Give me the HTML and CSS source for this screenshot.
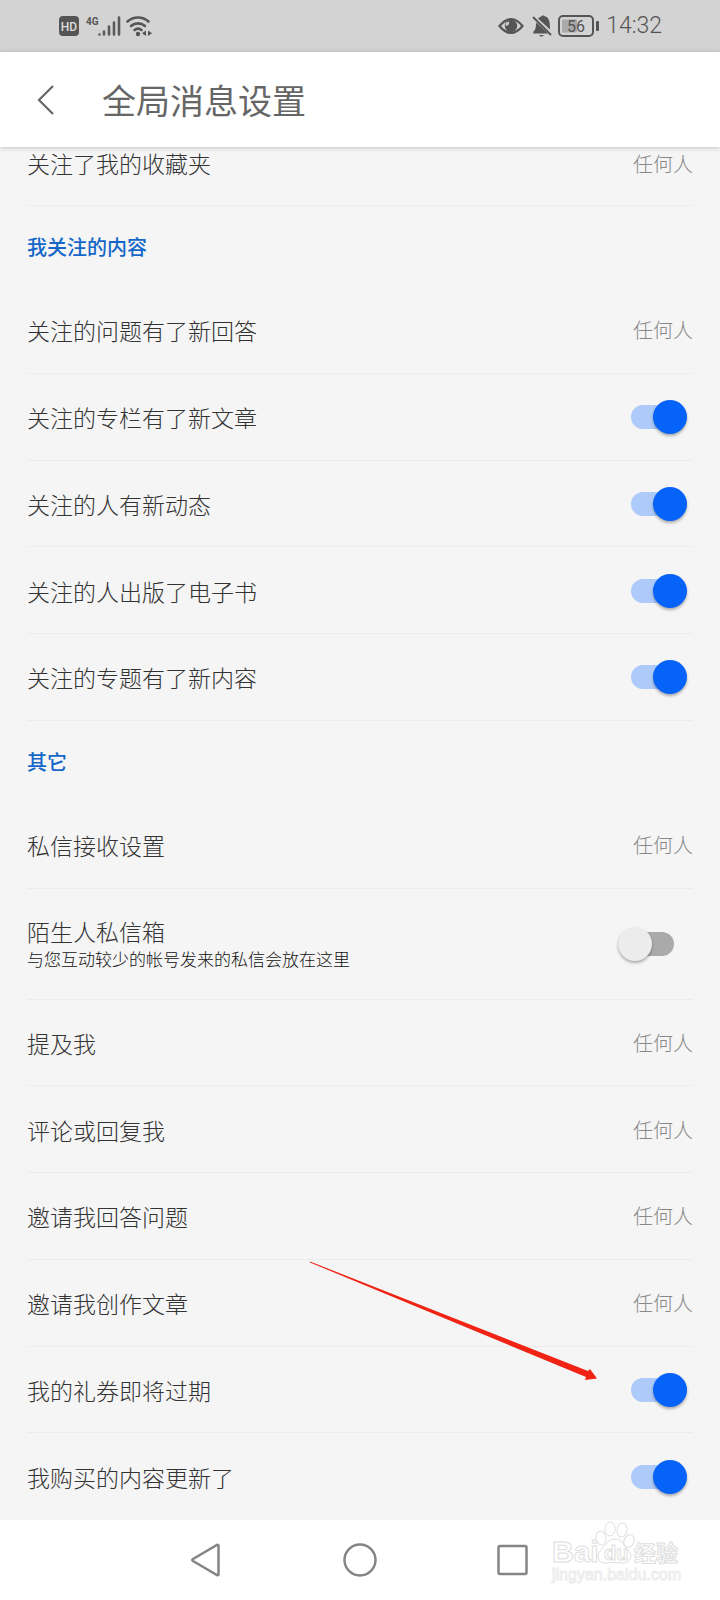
FILE: index.html
```html
<!DOCTYPE html>
<html lang="zh-CN">
<head>
<meta charset="utf-8">
<meta name="viewport" content="width=device-width, initial-scale=1">
<title>全局消息设置</title>
<link rel="stylesheet" href="styles.css">
</head>
<body>
<div class="screen">
  <div class="status">
    <div class="status-group">
      <svg width="96" height="28" viewBox="0 0 96 28" role="img" aria-label="HD 4G">
        <rect x="1" y="4" width="20" height="20" rx="4" fill="#555"/>
        <text x="11" y="18.500" class="hd">HD</text>
        <text x="28" y="13" class="net">4G</text>
        <g stroke="#5a5a5a" stroke-width="2.600" stroke-linecap="round">
          <path d="M41.500 22.500v0M46 19.500v3M51 14.500v8M56 10.500v12M61 5.500v17"/>
        </g>
        <g fill="none" stroke="#555" stroke-width="2.600" stroke-linecap="round">
          <path d="M69.500 9.500a16 16 0 0 1 21 0M73 14a10.500 10.500 0 0 1 14 0M76.500 18a5.500 5.500 0 0 1 7 0"/>
        </g>
        <circle cx="80" cy="22" r="2.200" fill="#555"/>
        <path d="M88 18.500v5.500l-4-2.700zM90 18.500v5.500l4-2.700z" fill="#555"/>
      </svg>
    </div>
    <div class="status-group">
      <svg width="102" height="28" viewBox="0 0 102 28" role="img" aria-label="56%">
        <path d="M1.500 14Q13 0 24.500 14Q13 28 1.500 14z" fill="none" stroke="#555" stroke-width="2.200"/>
        <circle cx="13" cy="14" r="6.200" fill="#555"/>
        <path d="M11 9.500a3.500 3.500 0 0 1-3 4.500a3.500 3.500 0 0 1 0-3z" fill="#d3d3d3"/>
        <path d="M35.500 19.500c3-2 2-7 3-9L50 21.500H35zM40 6.500Q43 4 44 4q1-1.500 2 0c5 1 6 5 6 13.500zM41 23h5q-2.500 3-5 0z" fill="#555"/>
        <path d="M35 5L53 23" stroke="#555" stroke-width="2"/>
        <rect x="61" y="4" width="34" height="20" rx="4" fill="none" stroke="#555" stroke-width="2"/>
        <rect x="64" y="7.500" width="15" height="13" fill="#aaa"/>
        <text x="78" y="20" class="charge">56</text>
        <rect x="98" y="9" width="3" height="10" rx="1" fill="#555"/>
      </svg>
      <time class="clock">14:32</time>
    </div>
  </div>

  <header class="appbar">
    <button class="back" type="button" aria-label="返回">
      <svg width="20" height="32" viewBox="0 0 20 32" fill="none" stroke="#666" stroke-width="2.200"><path d="M17 2L3 16L17 30"/></svg>
    </button>
    <h1 class="title">全局消息设置</h1>
  </header>

  <main class="list">
    <button class="row row-under" type="button"><span class="name">关注了我的收藏夹</span><span class="value">任何人</span></button>

    <h2 class="section">我关注的内容</h2>
    <button class="row" type="button"><span class="name">关注的问题有了新回答</span><span class="value">任何人</span></button>
    <label class="row"><span class="name">关注的专栏有了新文章</span><input class="switch" type="checkbox" checked></label>
    <label class="row"><span class="name">关注的人有新动态</span><input class="switch" type="checkbox" checked></label>
    <label class="row"><span class="name">关注的人出版了电子书</span><input class="switch" type="checkbox" checked></label>
    <label class="row"><span class="name">关注的专题有了新内容</span><input class="switch" type="checkbox" checked></label>

    <h2 class="section">其它</h2>
    <button class="row" type="button"><span class="name">私信接收设置</span><span class="value">任何人</span></button>
    <label class="row row-tall"><span class="name">陌生人私信箱<small class="note">与您互动较少的帐号发来的私信会放在这里</small></span><input class="switch" type="checkbox"></label>
    <button class="row" type="button"><span class="name">提及我</span><span class="value">任何人</span></button>
    <button class="row" type="button"><span class="name">评论或回复我</span><span class="value">任何人</span></button>
    <button class="row" type="button"><span class="name">邀请我回答问题</span><span class="value">任何人</span></button>
    <button class="row" type="button"><span class="name">邀请我创作文章</span><span class="value">任何人</span></button>
    <label class="row"><span class="name">我的礼券即将过期</span><input class="switch" type="checkbox" checked>
      <svg class="arrow" width="290" height="120" viewBox="0 0 290 120" aria-hidden="true"><path d="M1 0.500L279 110L281 108L288 117.500L276 119L277 116L1 1.500z" fill="#f02314"/></svg>
    </label>
    <label class="row"><span class="name">我购买的内容更新了</span><input class="switch" type="checkbox" checked></label>
  </main>

  <nav class="navbar">
    <button class="nav-key" type="button" aria-label="返回"><svg width="34" height="36" viewBox="0 0 34 36"><path d="M28.500 3.500V32.500Q28.500 33.500 27 33L3 19Q1.500 18 3 17L27 3Q28.500 2.500 28.500 3.500z"/></svg></button>
    <button class="nav-key" type="button" aria-label="主屏幕"><svg width="34" height="36" viewBox="0 0 34 36"><circle cx="17" cy="18" r="15.500"/></svg></button>
    <button class="nav-key" type="button" aria-label="最近任务"><svg width="34" height="36" viewBox="0 0 34 36"><rect x="2.500" y="4" width="28" height="28" rx="1.500"/></svg></button>
    <svg class="watermark" width="140" height="66" viewBox="0 0 140 66" role="img" aria-label="Baidu 经验">
      <g fill="#fff" stroke="#dedede">
        <text x="2" y="40" class="wm-latin">Bai</text>
        <ellipse cx="51" cy="16" rx="5" ry="7" transform="rotate(-12 51 16)"/>
        <ellipse cx="60" cy="7" rx="5" ry="7"/>
        <ellipse cx="72" cy="8" rx="5" ry="7" transform="rotate(10 72 8)"/>
        <ellipse cx="79" cy="19" rx="5" ry="6.500" transform="rotate(20 79 19)"/>
        <path d="M65 17c8 0 8 7 13 11c5 4 3 13-4 13c-5 0-13-1-18 0c-8 1-10-7-6-12c5-4 7-12 15-12z"/>
        <text x="54" y="38" class="wm-du">du</text>
        <text x="84" y="39" class="wm-han">经验</text>
        <text x="2" y="58" class="wm-url">jingyan.baidu.com</text>
      </g>
    </svg>
  </nav>
</div>
</body>
</html>
```
FILE: styles.css
```css
* { box-sizing: border-box; }

body {
  margin: 0;
  font-family: "Noto Sans CJK SC", sans-serif;
  background: #f5f5f5;
}

button {
  border: 0;
  padding: 0;
  background: none;
  font: inherit;
  text-align: left;
}

.screen {
  display: flex;
  flex-direction: column;
  min-height: 100vh;
}

.status {
  display: flex;
  justify-content: space-between;
  align-items: center;
  height: 52px;
  padding: 0 58px;
  background: #d3d3d3;
}

.status-group {
  display: flex;
  align-items: center;
  gap: 6px;
}

.hd, .net, .charge {
  font-family: Roboto, sans-serif;
}

.hd {
  font-size: 12px;
  font-weight: 500;
  fill: #ddd;
  text-anchor: middle;
}

.net {
  font-size: 10px;
  font-weight: 700;
  fill: #555;
}

.charge {
  font-size: 16px;
  fill: #555;
  text-anchor: middle;
}

.clock {
  font: 300 23px/28px Roboto, sans-serif;
  color: #555;
}

.appbar {
  position: relative;
  z-index: 1;
  display: flex;
  align-items: center;
  gap: 46px;
  height: 95px;
  padding: 0 36px;
  background: #fff;
  box-shadow: 0 1px 5px rgba(0, 0, 0, 0.2);
}

.back svg { display: block; }

.title {
  margin: 0;
  font-size: 34px;
  font-weight: 400;
  line-height: 48px;
  color: #666;
}

.list {
  flex: 1;
  display: flex;
  flex-direction: column;
}

.row {
  position: relative;
  flex: 1 0 86px;
  display: flex;
  align-items: center;
  justify-content: space-between;
  margin: 0 27px;
  padding-top: 1px;
  border-bottom: 1px solid #ececec;
}

.row-under {
  flex: 0 0 59px;
  align-items: flex-start;
}

.row-tall { flex: 0 0 111px; }

.row:last-child { border-bottom-color: #f2f2f2; }

.name {
  font-size: 23px;
  font-weight: 300;
  line-height: 30px;
  color: #333;
}

.note {
  display: block;
  font-size: 17px;
  line-height: 26px;
  color: #111;
}

.value {
  font-size: 20px;
  font-weight: 300;
  line-height: 32px;
  color: #888;
}

.section {
  flex: none;
  margin: 0;
  padding: 26px 27px;
  font-size: 20px;
  font-weight: 500;
  line-height: 29px;
  color: #1467c8;
}

.switch {
  appearance: none;
  display: flex;
  align-items: center;
  width: 56px;
  height: 24px;
  margin: 0 19px 0 0;
  border-radius: 12px;
  background: #aaa;
}

.switch::before {
  content: "";
  flex: none;
  width: 34px;
  height: 34px;
  border-radius: 50%;
  background: #ececec;
  box-shadow: 0 2px 3px rgba(0, 0, 0, 0.3);
}

.switch:checked {
  justify-content: flex-end;
  margin-right: 6px;
  background: #adcafa;
}

.switch:checked::before { background: #0563fa; }

.arrow {
  position: absolute;
  top: -86px;
  right: 94px;
  pointer-events: none;
}

.navbar {
  position: relative;
  display: flex;
  justify-content: center;
  align-items: center;
  gap: 119px;
  height: 80px;
  background: #fff;
}

.nav-key svg {
  display: block;
  fill: none;
  stroke: #858585;
  stroke-width: 2.5px;
}

.watermark {
  position: absolute;
  right: 30px;
  bottom: 12px;
  overflow: visible;
}

.wm-latin, .wm-du, .wm-url {
  font-family: "Liberation Sans", sans-serif;
}

.wm-latin { font-size: 30px; font-weight: 700; }
.wm-du { font-size: 20px; font-weight: 700; }
.wm-han { font-size: 22px; font-weight: 700; }
.wm-url { font-size: 16px; stroke: #ececec; }
```
